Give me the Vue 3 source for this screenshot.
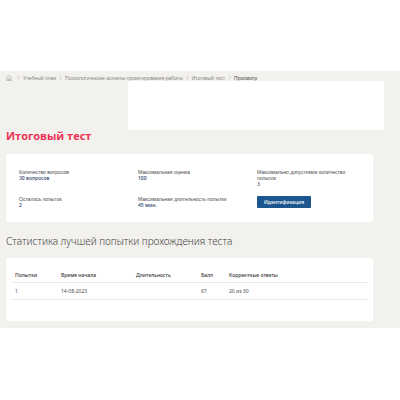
<template>
  <main class="page">
    <nav class="crumbs" aria-label="Навигация">
      <a class="crumb crumb--home" href="#" aria-label="Главная">
        <svg class="home-icon" viewBox="0 0 12 12" aria-hidden="true">
          <path d="M3.500 11h-2V5L6 1l4.500 4v6h-2M4.500 11V7.500h3V11z" />
        </svg>
      </a>
      <template v-for="(item, i) in crumbs" :key="item">
        <svg class="chevron" viewBox="0 0 4 8" aria-hidden="true">
          <path d="M.8.8 3.2 4 .8 7.2" />
        </svg>
        <a v-if="i < crumbs.length - 1" class="crumb" href="#">{{ item }}</a>
        <span v-else class="crumb crumb--current" aria-current="page">{{ item }}</span>
      </template>
    </nav>

    <div class="banner"></div>

    <h1 class="title">Итоговый тест</h1>

    <section class="card info">
      <dl v-for="item in info" :key="item.label" class="info-item">
        <dt>{{ item.label }}</dt>
        <dd>{{ item.value }}</dd>
      </dl>
      <div class="info-item">
        <button type="button" class="btn">Идентификация</button>
      </div>
    </section>

    <h2 class="subtitle">Статистика лучшей попытки прохождения теста</h2>

    <section class="card stats">
      <table class="table">
        <thead>
          <tr>
            <th class="col-try">Попытки</th>
            <th class="col-date">Время начала</th>
            <th class="col-length">Длительность</th>
            <th class="col-score">Балл</th>
            <th>Корректные ответы</th>
          </tr>
        </thead>
        <tbody>
          <tr v-for="row in attempts" :key="row.id">
            <td>{{ row.id }}</td>
            <td>{{ row.date }}</td>
            <td>{{ row.duration }}</td>
            <td>{{ row.score }}</td>
            <td>{{ row.correct }}</td>
          </tr>
        </tbody>
      </table>
    </section>
  </main>
</template>

<script setup>
const crumbs = [
  'Учебный план',
  'Психологические аспекты проектирования работы',
  'Итоговый тест',
  'Просмотр',
]

const info = [
  { label: 'Количество вопросов', value: '30 вопросов' },
  { label: 'Максимальная оценка', value: '100' },
  { label: 'Максимально допустимое количество попыток', value: '3' },
  { label: 'Осталось попыток', value: '2' },
  { label: 'Максимальная длительность попытки', value: '45 мин.' },
]

const attempts = [
  { id: 1, date: '14-08-2023', duration: '', score: 67, correct: '20 из 30' },
]
</script>

<style>
body {
  background: #fff;
}
</style>

<style scoped>
.page {
  margin-top: 71px;
  padding: 3px 27px 7px 6px;
  background: #f2f1ed;
  color: #4a4a4a;
  font-family: 'Noto Sans', 'Open Sans', sans-serif;
  font-size: 5px;
  line-height: 6px;
}

.crumbs {
  display: flex;
  align-items: center;
  gap: 3px;
  height: 7px;
}

.crumb {
  color: #858583;
  font-family: 'Liberation Sans', Arial, sans-serif;
  text-decoration: none;
  white-space: nowrap;
}

.crumb--home {
  display: flex;
  margin-right: 2px;
}

.crumb--current {
  color: #444;
}

.home-icon {
  width: 6px;
  height: 6px;
  fill: none;
  stroke: #8b8b89;
}

.chevron {
  flex: none;
  width: 3px;
  height: 5px;
  fill: none;
  stroke: #b5b5b2;
}

.banner {
  height: 49px;
  margin: 0 -11px 0 122px;
  background: #fff;
}

.title {
  margin: 0 0 12px;
  color: #ee3253;
  font-family: 'Open Sans', 'Noto Sans', sans-serif;
  font-size: 11px;
  font-weight: 700;
  line-height: 12px;
}

.card {
  background: #fff;
  border-radius: 2px;
}

.info {
  display: grid;
  grid-template-columns: repeat(3, 1fr);
  gap: 9px;
  padding: 15px 6px 14px 13px;
}

.info-item {
  margin: 0;
  padding-right: 20px;
}

.info-item dt {
  font-family: 'Liberation Sans', Arial, sans-serif;
}

.info-item dd {
  margin: 0;
  color: #1f4068;
  font-weight: 500;
}

.btn {
  display: block;
  padding: 3px 7px;
  border: 0;
  border-radius: 1px;
  background: #1b568f;
  color: #fff;
  font: inherit;
  font-weight: 500;
}

.subtitle {
  margin: 12px 0 10px;
  color: #444;
  font-size: 10px;
  font-weight: 300;
  line-height: 14px;
}

.stats {
  padding: 9px 6px 21px;
}

.table {
  width: 100%;
  border-collapse: collapse;
  table-layout: fixed;
}

.table th,
.table td {
  height: 16px;
  padding: 0 3px;
  border-bottom: 1px solid #e8e8e8;
  font-weight: 400;
  text-align: left;
}

.table th {
  height: 15px;
  color: #333;
  font-weight: 500;
}

.col-try {
  width: 40px;
}

.col-date {
  width: 69px;
}

.col-length {
  width: 59px;
}

.col-score {
  width: 22px;
}
</style>
